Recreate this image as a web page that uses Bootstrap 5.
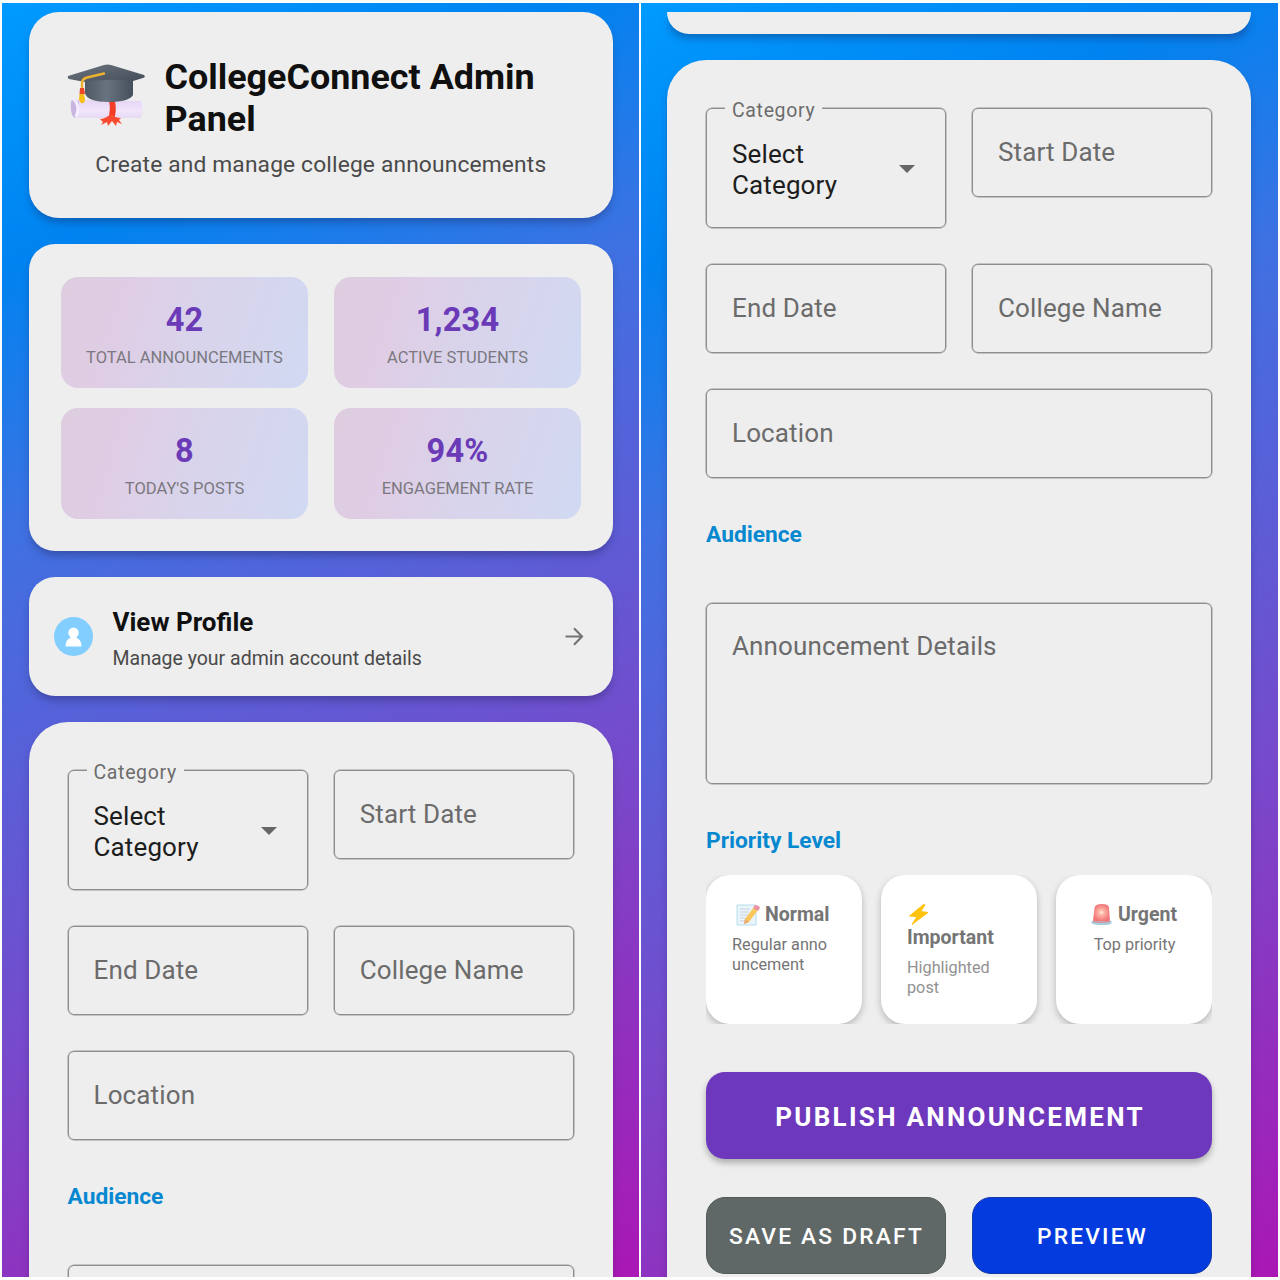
<!DOCTYPE html>
<html lang="en">
<head>
<meta charset="utf-8">
<meta name="viewport" content="width=device-width, initial-scale=1">
<title>CollegeConnect Admin Panel</title>
<link href="https://cdn.jsdelivr.net/npm/bootstrap@5.3.0/dist/css/bootstrap.min.css" rel="stylesheet">
<style>
body{width:1280px;height:1280px;overflow:hidden;background:#fdfdfe;font-family:Roboto,"Liberation Sans",sans-serif;color:#101010;padding:3px 2px;line-height:1.2}
.screens{gap:2px;height:1274px}
.phone{width:637px;height:1274px;overflow:hidden;padding:9px 26px 0 26.5px;background:linear-gradient(155deg,#009aff 0%,#0083f0 17%,#3f71e2 34%,#774acb 67%,#aa17b4 100%)}
.phone.second{width:637px;padding-right:27px;padding-left:26px}
.panel-card{background:#eee;border:0;border-radius:30px;box-shadow:0 6px 8px -2px rgba(30,25,70,.36);flex:none;color:#101010}
.head-card{height:206px;margin-bottom:26px;padding:44px 38px 0}
.head-card h1{font-size:35.9px;font-weight:700;line-height:42px;margin:0 0 0 18px}
.head-card p{font-size:22.75px;line-height:27px;letter-spacing:.16px;color:#4a4a4a;margin:11px 0 0}
.stat-card{height:307px;border-radius:26px;margin-bottom:26px;padding:32.5px}
.stat-grid{display:grid;grid-template-columns:247px 247px;gap:20px 26px}
.stat-box{height:111px;border-radius:17px;background:linear-gradient(108deg,#deccdf 0%,#dfcde5 25%,#d9d3ea 50%,#d1d9f2 100%);padding-top:24px}
.stat-box b{font-size:32.5px;line-height:39px;color:#6a3ab7;letter-spacing:.2px}
.stat-box span{font-size:16.5px;line-height:20px;color:#7b7880;margin-top:8px}
.profile-card{height:119px;border-radius:26px;margin-bottom:26px;padding:0 26px 0 25px}
.profile-card h2{font-size:26px;font-weight:700;line-height:31px;margin:4px 0 0}
.profile-card p{font-size:19.5px;line-height:24px;color:#4a4a4a;margin:9px 0 0}
.form-card{border-radius:39px;padding:48px 39px 0;height:1400px;margin-bottom:0}
.pair{display:grid;grid-template-columns:1fr 1fr;column-gap:26px;align-items:start}
.box{height:89px;border:1px solid #8e8e8e;box-shadow:0 0 0 .5px #999;border-radius:6px;padding:0 25px;font-size:26px;letter-spacing:.13px;color:#6b6b6b}
.category{height:120px;color:#1d1d1d;line-height:31px;position:relative;padding:3px 24px 0 25px}
.category label{position:absolute;left:18px;top:-10px;padding:0 7px;background:#eee;font-size:19.5px;line-height:24px;letter-spacing:.65px;color:#6c6c6c}
.row-gap{margin-top:36px}
.section-name{font-size:22.75px;font-weight:700;line-height:28px;color:#0688d1}
.tail-card{height:22px;border-radius:0 0 32px 32px;margin-bottom:26px}
.details{height:181px;padding-top:26px;line-height:32px}
.choices{display:grid;grid-template-columns:repeat(3,156px);justify-content:space-between;height:149px;overflow:hidden;margin-top:20px}
.choice{height:149px;background:#fff;border-radius:24px;box-shadow:0 3px 7px rgba(0,0,0,.24);padding:28px 25px 0 26px;color:#757575}
.choice strong{font-size:19.5px;line-height:23px;font-weight:700}
.choice p{font-size:16.25px;line-height:19.5px;margin:9px 0 0;white-space:nowrap}
.action{border-radius:19px;color:#fff;font-weight:500;font-size:22.75px;letter-spacing:2.2px;height:77px;padding:4px 0 0 1px}
.publish{height:87px;margin-top:48px;background:#6e38bd;font-size:26px;font-weight:700;letter-spacing:2.3px;padding-left:2px;box-shadow:0 4px 6px rgba(0,0,0,.27)}
.draft{background:#5f6866;border:1px solid #535b59}
.preview{background:#043bde;border:1px solid #1639a8}
svg{flex:none}
</style>
<script src="https://cdn.jsdelivr.net/npm/bootstrap@5.3.0/dist/js/bootstrap.bundle.min.js"></script>
</head>
<body>
<div class="screens d-flex">
<main class="phone d-flex flex-column">
  <header class="card panel-card head-card">
    <div class="d-flex">
      <svg width="80" height="72" viewBox="0 0 80 72" style="margin-top:8px">
        <defs>
          <linearGradient id="capTop" x1="0" y1="0" x2="1" y2="1"><stop stop-color="#6b737e"/><stop offset="1" stop-color="#444c58"/></linearGradient>
          <linearGradient id="capBase"><stop stop-color="#505965"/><stop offset=".45" stop-color="#687380"/><stop offset="1" stop-color="#46505d"/></linearGradient>
          <linearGradient id="paper" x1="0" y1="0" x2="0" y2="1"><stop stop-color="#e5d5f5"/><stop offset=".6" stop-color="#f1e5fc"/><stop offset="1" stop-color="#e6daf4"/></linearGradient>
        </defs>
        <path d="M9 36 74 37Q77 45 74 54L9 54Q5 51 5 43Q6 38 9 36Z" fill="url(#paper)"/>
        <path d="M4 37Q8 34 12 38L12 44Q12 51 8 54Q3 52 4 37Z" fill="#c9b5e0"/><path d="M6 34Q14 42 9 53" fill="none" stroke="#f4ecff" stroke-width="3"/>
        <path d="M42 37H48Q50 47 47 55H41Q44 46 42 37Z" fill="#f23c28"/>
        <path d="M44 50Q38 55 33 55L36 58 34 61 40 58 41 62 45 57 49 62 50 58 55 60 52 56 54 54Q48 54 44 50Z" fill="#fb4a30"/>
        <path d="M18 15Q41 11 66 15V31Q62 38 42 38Q20 38 18 29Z" fill="url(#capBase)"/>
        <path d="M1 12 37 1Q40 0 44 1L77 11Q79 13 76 14L66 17Q42 14 18 18L2 15Q0 14 1 12Z" fill="url(#capTop)"/>
        <path d="M37 9.500 20 13.500Q15 15 15 19V26" fill="none" stroke="#edb12d" stroke-width="2.4" stroke-linecap="round"/>
        <path d="M13 24H17L18 30H12.500Z" fill="#ef472b"/><path d="M12.500 30H17L18 36Q17 40 14 39L12 36Z" fill="#f9bd15"/>
      </svg>
      <h1>CollegeConnect Admin<br>Panel</h1>
    </div>
    <p class="text-center">Create and manage college announcements</p>
  </header>
  <section class="card panel-card stat-card">
    <div class="stat-grid">
      <div class="stat-box d-flex flex-column align-items-center"><b>42</b><span>TOTAL ANNOUNCEMENTS</span></div>
      <div class="stat-box d-flex flex-column align-items-center"><b>1,234</b><span>ACTIVE STUDENTS</span></div>
      <div class="stat-box d-flex flex-column align-items-center"><b>8</b><span>TODAY'S POSTS</span></div>
      <div class="stat-box d-flex flex-column align-items-center"><b>94%</b><span>ENGAGEMENT RATE</span></div>
    </div>
  </section>
  <section class="card panel-card profile-card flex-row align-items-center">
    <svg width="39" height="39" viewBox="0 0 39 39"><circle cx="19.5" cy="19.5" r="19.5" fill="#82ceff"/><circle cx="19.5" cy="15.8" r="5.2" fill="#fff"/><path d="M16.5 18H22.5V21Q27.5 22.5 27.5 29.5H11.5Q11.5 22.5 16.5 21Z" fill="#fff"/></svg>
    <div class="flex-grow-1" style="margin-left:20px"><h2>View Profile</h2><p>Manage your admin account details</p></div>
    <svg width="26" height="26" viewBox="0 0 26 26" fill="none" stroke="#747474" stroke-width="2.1"><path d="M4.5 12.500H21M13 4.3 21 12.500 13 20.7"/></svg>
  </section>
  <form class="card panel-card form-card">
    <div class="pair">
      <div class="box category d-flex align-items-center justify-content-between"><label>Category</label><span>Select<br>Category</span><svg width="28" height="12" viewBox="0 0 28 12"><path d="M6 1H22L14 9Z" fill="#666"/></svg></div>
      <div class="box d-flex align-items-center">Start Date</div>
    </div>
    <div class="pair row-gap"><div class="box d-flex align-items-center">End Date</div><div class="box d-flex align-items-center">College Name</div></div>
    <div class="box d-flex align-items-center row-gap">Location</div>
    <div class="section-name" style="margin-top:43px">Audience</div>
    <div class="box details" style="margin-top:54px"></div>
  </form>
</main>
<main class="phone second d-flex flex-column">
  <div class="panel-card tail-card"></div>
  <form class="card panel-card form-card">
    <div class="pair">
      <div class="box category d-flex align-items-center justify-content-between"><label>Category</label><span>Select<br>Category</span><svg width="28" height="12" viewBox="0 0 28 12"><path d="M6 1H22L14 9Z" fill="#666"/></svg></div>
      <div class="box d-flex align-items-center">Start Date</div>
    </div>
    <div class="pair row-gap"><div class="box d-flex align-items-center">End Date</div><div class="box d-flex align-items-center">College Name</div></div>
    <div class="box d-flex align-items-center row-gap">Location</div>
    <div class="section-name" style="margin-top:43px">Audience</div>
    <div class="box details" style="margin-top:54px">Announcement Details</div>
    <div class="section-name" style="margin-top:43px">Priority Level</div>
    <div class="choices">
      <div class="choice">
        <div class="d-flex align-items-center" style="margin-left:4px">
          <svg width="24" height="23" viewBox="0 0 24 23"><path d="M1 2H20V22H1Z" fill="#eaf4fb" stroke="#b4deed"/><path d="M4 6H14M4 9H13M4 12H12M4 15H10M4 18H9" stroke="#c4ccd6" stroke-width=".8"/><path d="M9 16 18 4 22 7 13 19 8 21Z" fill="#f9c75c"/><path d="M17 5 19 2Q23 2 24 5L22 8Z" fill="#ed91a4"/><path d="M9 16 13 19 8 21Z" fill="#e7a973"/></svg>
          <strong style="margin-left:5px">Normal</strong>
        </div>
        <p>Regular anno<br>uncement</p>
      </div>
      <div class="choice">
        <svg class="d-block" width="24" height="23" viewBox="0 0 24 23"><path d="M16 2 2.500 13 10 13.500 5 21.500 21 9.500 13.500 8.500 18 2Q17 1 16 2Z" fill="#ffc20d" stroke="#ffc20d" stroke-linejoin="round"/></svg>
        <strong class="d-block">Important</strong>
        <p style="color:#929292">Highlighted<br>post</p>
      </div>
      <div class="choice">
        <div class="d-flex align-items-center" style="margin-left:8px">
          <svg width="24" height="23" viewBox="0 0 24 23"><defs><radialGradient id="lamp"><stop stop-color="#fff0df"/><stop offset=".3" stop-color="#ffb6a7"/><stop offset="1" stop-color="#f27679"/></radialGradient></defs><path d="M3 18 4.500 5Q5 1 12 1T19 5L20 18Z" fill="url(#lamp)"/><path d="M1.500 18H21.500V20Q21 22 12 22T1.500 20Z" fill="#a4d0dd"/><path d="M3 17Q12 20 20 17V19Q12 21 3 19Z" fill="#d98f98"/></svg>
          <strong style="margin-left:4px">Urgent</strong>
        </div>
        <p class="text-center">Top priority</p>
      </div>
    </div>
    <button type="button" class="btn action publish">PUBLISH ANNOUNCEMENT</button>
    <div class="pair" style="margin-top:38px"><button type="button" class="btn action draft">SAVE AS DRAFT</button><button type="button" class="btn action preview">PREVIEW</button></div>
  </form>
</main>
</div>
</body>
</html>
